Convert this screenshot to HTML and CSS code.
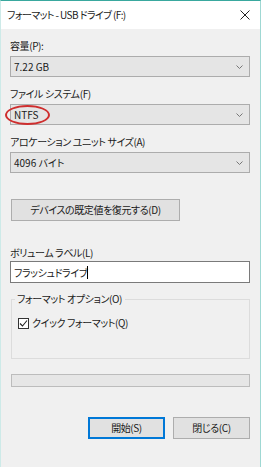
FILE: index.html
```html
<!DOCTYPE html>
<html lang="ja">
<head>
  <meta charset="UTF-8" />
  <title>フォーマット - USB ドライブ (F:)</title>
  <meta name="viewport" content="width=device-width, initial-scale=1.0" />
  <link rel="stylesheet" href="styles.css">
</head>
<body>
  <div class="window">
    <div class="titlebar">
      <span class="title">フォーマット - USB ドライブ (F:)</span>
      <svg class="close" width="10" height="10" viewBox="0 0 10 10">
        <path d="M0.5 0.5 L9.5 9.5 M9.5 0.5 L0.5 9.5" stroke="#222" stroke-width="1" fill="none" />
      </svg>
    </div>

    <div class="content">
      <div class="label">容量(P):</div>
      <div class="select">
        <span>7.22 GB</span>
        <svg class="chevron" width="7" height="4" viewBox="0 0 7 4"><path d="M0.5 0.5 L3.5 3.5 L6.5 0.5" stroke="#777" fill="none" /></svg>
      </div>

      <div class="label">ファイル システム(F)</div>
      <div class="select marked">
        <span>NTFS</span>
        <svg class="chevron" width="7" height="4" viewBox="0 0 7 4"><path d="M0.5 0.5 L3.5 3.5 L6.5 0.5" stroke="#777" fill="none" /></svg>
        <span class="circle"></span>
      </div>

      <div class="label">アロケーション ユニット サイズ(A)</div>
      <div class="select">
        <span>4096 バイト</span>
        <svg class="chevron" width="7" height="4" viewBox="0 0 7 4"><path d="M0.5 0.5 L3.5 3.5 L6.5 0.5" stroke="#777" fill="none" /></svg>
      </div>

      <button class="btn restore">デバイスの既定値を復元する(D)</button>

      <div class="label volume">ボリューム ラベル(L)</div>
      <div class="textbox">フラッシュドライブ<span class="caret"></span></div>

      <fieldset class="group">
        <legend>フォーマット オプション(O)</legend>
        <div class="check">
          <span class="box">
            <svg width="9" height="9" viewBox="0 0 9 9"><path d="M1 4.5 L3.5 7 L8 1.5" stroke="#222" stroke-width="1.1" fill="none" /></svg>
          </span>
          クイック フォーマット(Q)
        </div>
      </fieldset>

      <div class="progress"></div>

      <div class="actions">
        <button class="btn default">開始(S)</button>
        <button class="btn">閉じる(C)</button>
      </div>
    </div>
  </div>
</body>
</html>
```

FILE: styles.css
```css
* {
  box-sizing: border-box;
}

html, body {
  height: 100%;
}

body {
  margin: 0;
  background: #dff2f1;
  font-family: "Noto Sans CJK JP", sans-serif;
  font-size: 10px;
  font-feature-settings: "palt";
  color: #1a1a1a;
}

.window {
  height: 100%;
  background: #f0f0f0;
  border-top: 1px solid #39a89e;
  border-left: 1px solid #cdeae8;
  border-right: 1px solid #9fd8d3;
}

.titlebar {
  height: 28px;
  background: #fff;
  display: flex;
  align-items: center;
  justify-content: space-between;
  padding: 0 10px 0 6px;
}

.title {
  line-height: 16px;
  letter-spacing: -0.6px;
}

.content {
  padding: 0 10px 0 9px;
  display: flex;
  flex-direction: column;
  align-items: stretch;
}

.label,
.btn,
.textbox,
.group legend,
.check {
  letter-spacing: -0.4px;
}

.label {
  line-height: 16px;
  margin-top: 9px;
}

.select {
  position: relative;
  height: 21px;
  margin-top: 2px;
  background: #e5e5e5;
  border: 1px solid #acacac;
  display: flex;
  align-items: center;
  justify-content: space-between;
  padding: 0 6px 0 3px;
}

.circle {
  position: absolute;
  left: -6px;
  top: 0;
  width: 45px;
  height: 20px;
  border: 2px solid #cf2e2e;
  border-radius: 50%;
}

.btn {
  font: inherit;
  font-feature-settings: "palt";
  color: #1a1a1a;
  background: #e1e1e1;
  border: 1px solid #adadad;
  height: 22px;
  padding: 0;
  line-height: 18px;
}

.restore {
  align-self: flex-start;
  width: 169px;
  margin: 26px 0 0 1px;
}

.volume {
  margin-top: 24px;
}

.textbox {
  height: 22px;
  background: #fff;
  border: 1px solid #7a7a7a;
  display: flex;
  align-items: center;
  padding: 0 3px;
}

.caret {
  width: 1px;
  height: 13px;
  background: #000;
}

.group {
  margin: 8px 0 0 1px;
  padding: 8px 6px 0;
  height: 68px;
  border: 1px solid #dcdcdc;
  min-width: 0;
}

.group legend {
  padding: 0 3px 0 2px;
  margin-left: -3px;
  line-height: 16px;
}

.check {
  display: flex;
  align-items: center;
  line-height: 16px;
}

.box {
  width: 11px;
  height: 11px;
  border: 1px solid #333;
  background: #fff;
  display: flex;
  align-items: center;
  justify-content: center;
  margin-right: 3px;
}

.progress {
  height: 13px;
  margin: 15px 0 0 1px;
  background: #e6e6e6;
  border: 1px solid #bcbcbc;
}

.actions {
  display: flex;
  justify-content: flex-end;
  gap: 8px;
  margin-top: 30px;
}

.actions .btn {
  width: 77px;
}

.btn.default {
  border-color: #0078d7;
  box-shadow: inset 0 0 0 1px #0078d7;
}
```
